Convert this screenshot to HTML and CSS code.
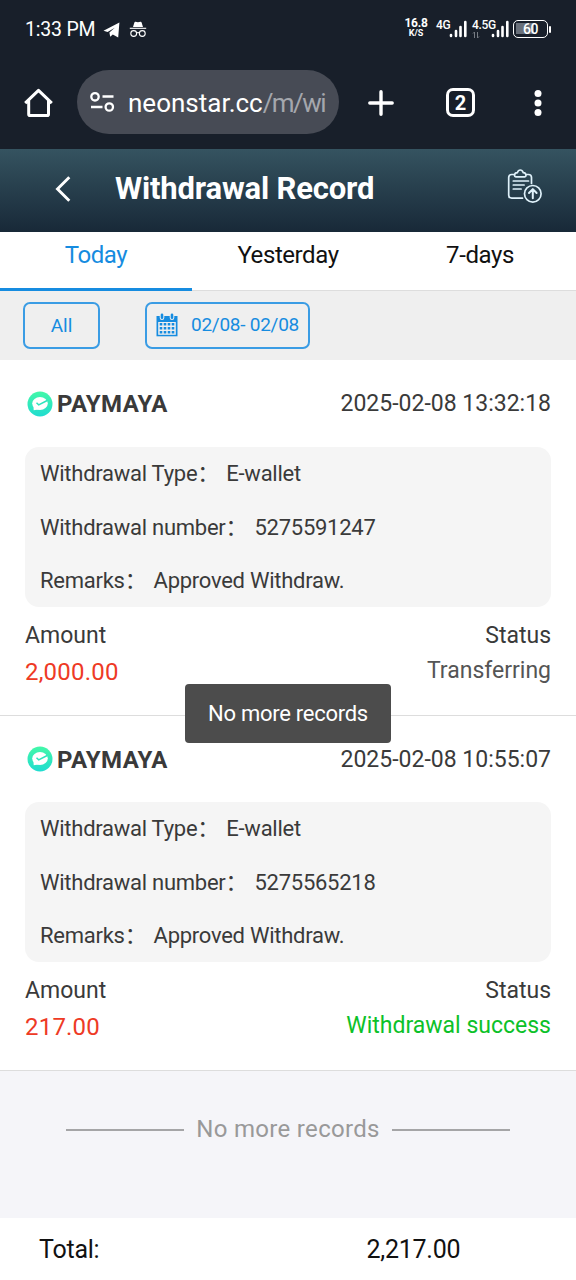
FILE: index.html
```html
<!DOCTYPE html>
<html lang="en">
<head>
<meta charset="utf-8">
<title>Withdrawal Record</title>
<link rel="stylesheet" href="styles.css">
</head>
<body>
<div class="statusbar">
  <span class="clock">1:33 PM</span>
  <svg class="tg" width="18" height="16" viewBox="0 0 18 16"><path d="M.5 8.800 16.400.5 15.200 15.500l-5.400-3-2.600 2.300-.8-4.400 5.400-4.700-7.200 4.300z" fill="#fff"/></svg>
  <svg class="incog" width="18" height="17" viewBox="0 0 18 17"><path d="M4 6 5.400 1.400Q5.700.6 6.600.8L9 1.300l2.400-.5q.9-.2 1.200.6L14 6z" fill="#fff"/><path d="M.8 7.300h16.400" stroke="#fff" stroke-width="1.100"/><g fill="none" stroke="#fff" stroke-width="1.100"><circle cx="4.700" cy="12.500" r="2.900"/><circle cx="13.300" cy="12.500" r="2.900"/><path d="M7.500 12q1.500-1 3 0"/></g></svg>
  <div class="speed"><span class="speed-num">16.8</span><span class="speed-unit">K/S</span></div>
  <span class="net net-a">4G</span>
  <svg class="bars bars-a" width="18" height="18" viewBox="0 0 18 18"><path d="M2 15v1M7 11v5M11.500 7v9M16.300 2v14" stroke="#fff" stroke-width="2.600" stroke-linecap="round"/></svg>
  <div class="net net-b"><span>4.5G</span><svg width="8" height="8" viewBox="0 0 8 8"><path d="M2.500 7V1L1 2.500M5.500 1v6L7 5.500" fill="none" stroke="#777c84"/></svg></div>
  <svg class="bars" width="18" height="18" viewBox="0 0 18 18"><path d="M2 15v1M7 11v5M11.500 7v9M16.300 2v14" stroke="#fff" stroke-width="2.600" stroke-linecap="round"/></svg>
  <div class="battery"><span>60</span></div><i class="nub"></i>
</div>
<div class="browser">
  <svg class="home" width="30" height="30" viewBox="0 0 30 30"><path d="M1.200 15.200 14.500 2.300l13.300 12.900M4.700 12.500v13.700q0 1.300 1.300 1.300h17.200q1.300 0 1.300-1.300V12.500" fill="none" stroke="#fff" stroke-width="3" stroke-linejoin="round"/></svg>
  <div class="url">
    <svg width="26" height="22" viewBox="0 0 26 22"><g fill="none" stroke="#fff" stroke-width="2.300"><circle cx="6" cy="5.800" r="3.700"/><circle cx="20.300" cy="16" r="3.700"/><path d="M13.500 5.500H24.500M2 16h11.500"/></g></svg>
    <span class="address">neonstar.cc<span class="path">/m/wi</span></span>
  </div>
  <svg class="plus" width="26" height="26" viewBox="0 0 26 26"><path d="M13 1.800v22.400M1.800 13h22.400" stroke="#fff" stroke-width="3.400" stroke-linecap="round"/></svg>
  <span class="tabcount">2</span>
  <svg class="more" width="8" height="28" viewBox="0 0 8 28"><g fill="#fff"><circle cx="4" cy="4.500" r="3.500"/><circle cx="4" cy="14" r="3.500"/><circle cx="4" cy="23.500" r="3.500"/></g></svg>
</div>
<header class="titlebar">
  <svg class="back" width="18" height="28" viewBox="0 0 18 28"><path d="M15.300 2.300 3.500 14l11.800 11.700" fill="none" stroke="#fff" stroke-width="2.900"/></svg>
  <h1>Withdrawal Record</h1>
  <svg class="clip" width="36" height="36" viewBox="0 0 36 36"><g fill="none" stroke="#dff1fa" stroke-width="1.700" stroke-linecap="round" stroke-linejoin="round"><path d="M7.500 5.500H4.700q-3 0-3 3v17.700q0 3 3 3h10.800M19 5.500h2.500q3 0 3 3v6M7.500 6.500q0-2.500 2.800-2.800 1-2.700 3-2.700t3 2.700q2.700.3 2.700 2.800 0 1.300-1.300 1.300H8.800q-1.300 0-1.300-1.300zM6.300 12h15.200M6.300 16h10.800M6.300 20h7.800"/><circle cx="25.800" cy="24.800" r="8.300"/><path d="M25.800 29.300v-8.600M22 24l3.800-3.900 3.800 3.900" stroke-width="2"/></g></svg>
</header>
<nav class="tabs"><span class="tab active">Today</span><span class="tab">Yesterday</span><span class="tab">7-days</span></nav>
<div class="filters">
  <span class="pill all">All</span>
  <span class="pill date"><svg width="22" height="24" viewBox="0 0 22 24"><path d="M.5 3H21.500v20.300H.5z" fill="#168ce0"/><path d="M2.200 9h17.600v12.800H2.200z" fill="#efefef"/><path d="M6 1.800v3M16 1.800v3" stroke="#efefef" stroke-width="4.600" stroke-linecap="round"/><path d="M6 1.700v3M16 1.700v3" stroke="#168ce0" stroke-width="2.600" stroke-linecap="round"/><path d="M3.700 11.300h14.800M3.700 15.300h14.800M3.700 19.300h14.800" stroke="#168ce0" stroke-width="2.500" stroke-dasharray="2.600 1.400"/></svg><span>02/08- 02/08</span></span>
</div>
<main>
  <section class="record">
    <div class="head"><svg class="maya" width="26" height="26" viewBox="0 0 26 26"><defs><linearGradient id="mint" x1="0" y1="0" x2="0" y2="1"><stop offset="0" stop-color="#43f8a8"/><stop offset="1" stop-color="#20dcd0"/></linearGradient></defs><circle cx="13" cy="13" r="12.500" fill="url(#mint)"/><ellipse cx="13" cy="12.500" rx="7.800" ry="6.400" fill="#fff"/><path d="m6.500 15 .2 4.300 6-1z" fill="#fff"/><path d="m9.500 11.800 2.200 2 8.500-4.300" fill="none" stroke="#2ce4bd" stroke-width="1.500"/></svg><b>PAYMAYA</b><time>2025-02-08 13:32:18</time></div>
    <div class="details">
      <p>Withdrawal Type<i>：</i> E-wallet</p>
      <p>Withdrawal number<i>：</i> 5275591247</p>
      <p>Remarks<i>：</i> Approved Withdraw.</p>
    </div>
    <div class="labels"><span>Amount</span><span>Status</span></div>
    <div class="values"><span class="amount">2,000.00</span><span class="status">Transferring</span></div>
  </section>
  <section class="record">
    <div class="head"><svg class="maya" width="26" height="26" viewBox="0 0 26 26"><circle cx="13" cy="13" r="12.500" fill="url(#mint)"/><ellipse cx="13" cy="12.500" rx="7.800" ry="6.400" fill="#fff"/><path d="m6.500 15 .2 4.300 6-1z" fill="#fff"/><path d="m9.500 11.800 2.200 2 8.500-4.300" fill="none" stroke="#2ce4bd" stroke-width="1.500"/></svg><b>PAYMAYA</b><time>2025-02-08 10:55:07</time></div>
    <div class="details">
      <p>Withdrawal Type<i>：</i> E-wallet</p>
      <p>Withdrawal number<i>：</i> 5275565218</p>
      <p>Remarks<i>：</i> Approved Withdraw.</p>
    </div>
    <div class="labels"><span>Amount</span><span>Status</span></div>
    <div class="values"><span class="amount">217.00</span><span class="status success">Withdrawal success</span></div>
  </section>
  <div class="end"><hr><span>No more records</span><hr></div>
</main>
<footer><span class="total">Total:</span><span>2,217.00</span></footer>
<div class="toast">No more records</div>
</body>
</html>
```
FILE: styles.css
```css
* { box-sizing: border-box; }
body { margin: 0; width: 576px; height: 1280px; overflow: hidden; display: flex; flex-direction: column; font-family: Roboto, "Noto Sans CJK SC", sans-serif; color: #3a3a3a; background: #fff; }
svg { display: block; flex: none; }
p, h1 { margin: 0; }
.statusbar { height: 58px; flex: none; background: #181f2a; color: #fff; display: flex; align-items: center; padding: 0 25px 0 25px; }
.clock { font-size: 19.5px; letter-spacing: -.2px; white-space: nowrap; width: 78px; }
.tg { margin-top: 1px; }
.incog { margin-left: 8px; }
.speed { margin-left: auto; width: 24px; display: flex; flex-direction: column; align-items: center; font-weight: 700; margin-right: 8px; padding-bottom: 3px; }
.speed-num { font-size: 12px; line-height: 11px; letter-spacing: -.3px; }
.speed-unit { font-size: 9px; line-height: 9px; }
.net { font-size: 12px; letter-spacing: -.3px; font-weight: 500; line-height: 12px; height: 20px; white-space: nowrap; }
.net-a { width: 13px; }
.bars-a { margin-right: 5px; }
.net-b { width: 19px; }
.battery { width: 35px; height: 18px; margin-left: 4px; border: 1.5px solid #fff; border-radius: 5px; padding: 2px; background: linear-gradient(#69707a, #69707a) 2px 2px / 18px 11px no-repeat; display: flex; align-items: center; justify-content: center; font-size: 14px; letter-spacing: -.5px; font-weight: 500; }
.nub { width: 2px; height: 7px; background: #fff; margin-left: 1px; border-radius: 1px; }
.browser { height: 91px; flex: none; background: #181f2a; display: flex; align-items: center; padding: 0 34px 2px 24px; color: #fff; }
.url { width: 262px; height: 64px; margin-left: 23px; border-radius: 32px; background: #474b55; display: flex; align-items: center; padding-left: 12px; gap: 13px; margin-top: -1px; }
.address { font-size: 26px; white-space: nowrap; padding-top: 2px; }
.path { color: #a4a7ad; letter-spacing: -1.600px; }
.plus { margin-left: 29px; }
.tabcount { width: 29px; height: 29px; border: 3px solid #fff; border-radius: 7px; margin-left: 52px; font-size: 20px; font-weight: 700; display: flex; align-items: center; justify-content: center; }
.more { margin-left: auto; }
.titlebar { height: 83px; flex: none; background: linear-gradient(#355360, #182938); display: flex; align-items: center; color: #fff; padding: 0 33px 4px 54px; }
h1 { font-size: 31px; font-weight: 700; line-height: 40px; margin-left: 43px; white-space: nowrap; letter-spacing: -.17px; }
.clip { margin-left: auto; margin-top: -3px; }
.tabs { height: 59px; flex: none; display: grid; grid-template-columns: repeat(3, 1fr); border-bottom: 1px solid #ddd; color: #111; }
.tab { text-align: center; font-size: 24px; line-height: 47px; height: 59px; letter-spacing: -.42px; }
.tab.active { color: #168ce0; border-bottom: 3px solid #168ce0; }
.filters { height: 69px; flex: none; background: #efefef; display: flex; align-items: center; padding-left: 23px; gap: 45px; color: #168ce0; }
.pill { height: 47px; border: 2px solid #3a9ce4; border-radius: 7px; font-size: 19px; display: flex; align-items: center; justify-content: center; white-space: nowrap; }
.all { width: 77px; }
.date { width: 165px; gap: 13px; letter-spacing: -.25px; padding-bottom: 2px; }
.record { height: 355px; border-bottom: 1px solid #ddd; padding: 0 25px; background: #fff; }
.record:first-child { height: 356px; }
.head { height: 86px; display: flex; align-items: center; padding-left: 2px; }
.record:first-child .head { height: 87px; }
.head b { font-size: 24px; margin-left: 4px; padding-top: 1px; letter-spacing: .36px; }
.head time { font-size: 23px; margin-left: auto; }
.details { height: 160px; background: #f5f5f5; border-radius: 14px; padding-left: 15px; font-size: 22px; letter-spacing: -.26px; }
.details p { line-height: 53.5px; height: 53.5px; white-space: nowrap; }
.details i { font-style: normal; font-family: "Noto Sans CJK SC", sans-serif; line-height: 1; margin-right: 2px; }
.labels, .values { display: flex; justify-content: space-between; font-size: 23px; line-height: 36px; }
.labels { padding-top: 11px; height: 47px; }
.amount { color: #ee3a25; font-size: 24px; letter-spacing: .2px; }
.status { line-height: 33px; color: #555; }
.status.success { color: #0cc129; }
main { height: 858px; flex: none; background: #f5f5f9; }
.end { height: 115px; display: flex; align-items: center; gap: 12px; padding: 0 66px; font-size: 24px; letter-spacing: .32px; color: #999; white-space: nowrap; }
hr { flex: 1; border: 0; height: 2px; margin: 3px 0 0; background: #a5a5a7; }
footer { height: 62px; display: flex; font-size: 25px; letter-spacing: -.25px; color: #111; line-height: 64px; padding-left: 39px; }
.total { flex: none; width: 327.5px; }
.toast { position: absolute; left: 185px; top: 684px; width: 206px; height: 59px; border-radius: 4px; background: #4c4c4c; color: #fff; font-size: 22px; letter-spacing: -.27px; line-height: 59px; text-align: center; }
```
